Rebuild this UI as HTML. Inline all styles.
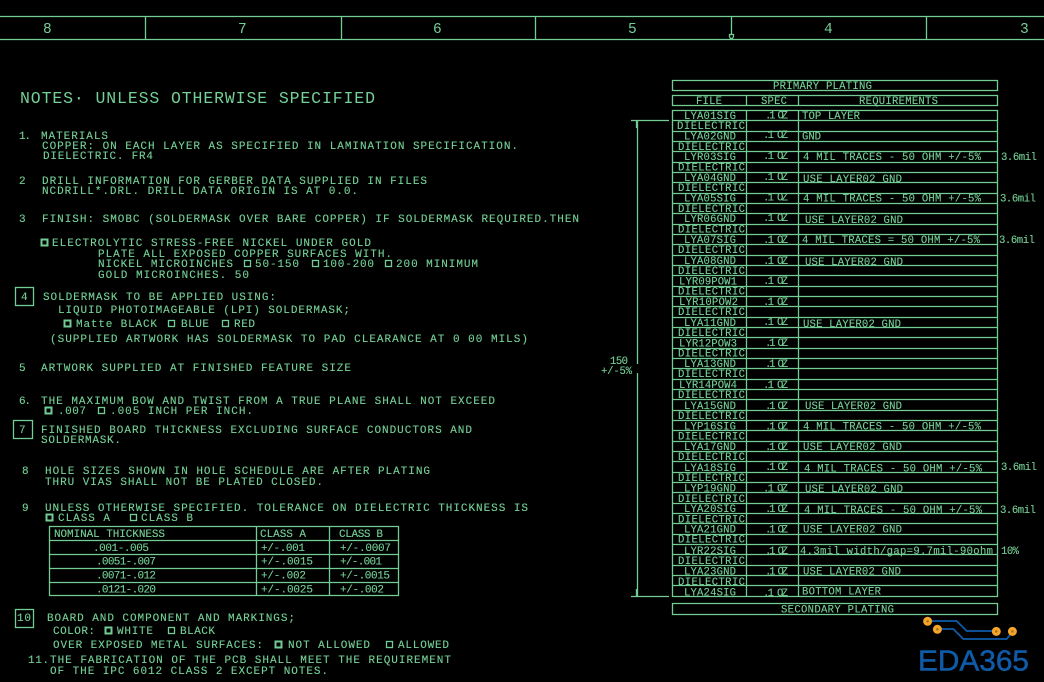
<!DOCTYPE html>
<html><head><meta charset="utf-8"><style>
html,body{margin:0;padding:0;background:#000;width:1044px;height:682px;overflow:hidden}
svg{display:block}
text{font-family:"Liberation Mono",monospace;font-size:11px;fill:#74d096;stroke:#74d096;stroke-width:.12}
.t{font-size:10.6px}
.d{font-size:14.5px;stroke-width:0}
.h{font-size:16.5px;stroke-width:0}
.l{fill:none;stroke:#72cc94;stroke-width:1.3}
.b{fill:none;stroke:#72cc94;stroke-width:1.3}
.k{fill:none;stroke:#72cc94;stroke-width:2}
.logo{font-family:"Liberation Sans",sans-serif;font-size:29px;fill:#0f5ba8;stroke:#0f5ba8;stroke-width:.5}
</style></head><body>
<svg width="1044" height="682" viewBox="0 0 1044 682" xmlns="http://www.w3.org/2000/svg">
<path class="l" d="M0 16.5H1044M0 39.5H1044M145.5 16V39M341.5 16V39M535.5 16V39M731.5 16V34M926.5 16V39"/>
<path class="l" d="M729.5 34.5h4v2l-1 2h-2l-1-2z"/>
<text class="d" x="43" y="33" textLength="8">8</text>
<text class="d" x="238" y="33" textLength="8">7</text>
<text class="d" x="433" y="33" textLength="8">6</text>
<text class="d" x="628" y="33" textLength="8">5</text>
<text class="d" x="824" y="33" textLength="8">4</text>
<text class="d" x="1020" y="33" textLength="8">3</text>

<text class="h" x="20" y="103" textLength="355">NOTES· UNLESS OTHERWISE SPECIFIED</text>
<text x="19" y="139" textLength="12">1.</text>
<text x="41" y="139" textLength="67">MATERIALS</text>
<text x="42" y="149" textLength="476">COPPER: ON EACH LAYER AS SPECIFIED IN LAMINATION SPECIFICATION.</text>
<text x="43" y="159" textLength="110">DIELECTRIC. FR4</text>
<text x="19" y="184">2</text>
<text x="42" y="184" textLength="385">DRILL INFORMATION FOR GERBER DATA SUPPLIED IN FILES</text>
<text x="42" y="194" textLength="316">NCDRILL*.DRL. DRILL DATA ORIGIN IS AT 0.0.</text>
<text x="19" y="222">3</text>
<text x="42" y="222" textLength="537">FINISH: SMOBC (SOLDERMASK OVER BARE COPPER) IF SOLDERMASK REQUIRED.THEN</text>

<rect class="k" x="41.5" y="239.5" width="6" height="6"/>
<text x="52" y="246" textLength="319">ELECTROLYTIC STRESS-FREE NICKEL UNDER GOLD</text>
<text x="98" y="257" textLength="294">PLATE ALL EXPOSED COPPER SURFACES WITH.</text>
<text x="98" y="267" textLength="135">NICKEL MICROINCHES</text>
<rect class="b" x="244.5" y="260.5" width="6" height="6"/>
<text x="255" y="267" textLength="44">50-150</text>
<rect class="b" x="312.5" y="260.5" width="6" height="6"/>
<text x="323" y="267" textLength="51">100-200</text>
<rect class="b" x="385.5" y="260.5" width="6" height="6"/>
<text x="396" y="267" textLength="82">200 MINIMUM</text>
<text x="98" y="278" textLength="151">GOLD MICROINCHES. 50</text>

<rect class="b" x="15.5" y="287.5" width="18" height="18"/>
<text x="21" y="300">4</text>
<text x="43" y="300" textLength="233">SOLDERMASK TO BE APPLIED USING:</text>
<text x="58" y="313" textLength="292">LIQUID PHOTOIMAGEABLE (LPI) SOLDERMASK;</text>
<rect class="k" x="64.5" y="320.5" width="6" height="6"/>
<text x="76" y="327" textLength="81">Matte BLACK</text>
<rect class="b" x="168.5" y="320.5" width="6" height="6"/>
<text x="181" y="327" textLength="28">BLUE</text>
<rect class="b" x="222.5" y="320.5" width="6" height="6"/>
<text x="234" y="327" textLength="21">RED</text>
<text x="50" y="342" textLength="478">(SUPPLIED ARTWORK HAS SOLDERMASK TO PAD CLEARANCE AT 0 00 MILS)</text>

<text x="19" y="371">5</text>
<text x="41" y="371" textLength="310">ARTWORK SUPPLIED AT FINISHED FEATURE SIZE</text>
<text x="19" y="404" textLength="12">6.</text>
<text x="41" y="404" textLength="454">THE MAXIMUM BOW AND TWIST FROM A TRUE PLANE SHALL NOT EXCEED</text>
<rect class="k" x="45.5" y="407.5" width="6" height="6"/>
<text x="58" y="414" textLength="28">.007</text>
<rect class="b" x="98.5" y="407.5" width="6" height="6"/>
<text x="110" y="414" textLength="143">.005 INCH PER INCH.</text>

<rect class="b" x="13.5" y="420.5" width="19" height="18"/>
<text x="19" y="433">7</text>
<text x="41" y="433" textLength="431">FINISHED BOARD THICKNESS EXCLUDING SURFACE CONDUCTORS AND</text>
<text x="41" y="443" textLength="80">SOLDERMASK.</text>

<text x="22" y="474">8</text>
<text x="45" y="474" textLength="385">HOLE SIZES SHOWN IN HOLE SCHEDULE ARE AFTER PLATING</text>
<text x="45" y="485" textLength="278">THRU VIAS SHALL NOT BE PLATED CLOSED.</text>
<text x="22" y="511">9</text>
<text x="45" y="511" textLength="483">UNLESS OTHERWISE SPECIFIED. TOLERANCE ON DIELECTRIC THICKNESS IS</text>
<rect class="k" x="46.5" y="514.5" width="6" height="6"/>
<text x="58" y="521" textLength="52">CLASS A</text>
<rect class="b" x="130.5" y="514.5" width="6" height="6"/>
<text x="141" y="521" textLength="52">CLASS B</text>

<path class="b" d="M49.5 526.5H398.5V595.5H49.5ZM49.5 540.5H398.5M49.5 554.5H398.5M49.5 568.5H398.5M49.5 582.5H398.5M256.5 526.5V595.5M329.5 526.5V595.5"/>
<text x="54" y="537" textLength="111">NOMINAL THICKNESS</text>
<text x="260" y="537" textLength="46">CLASS A</text>
<text x="339" y="537" textLength="44">CLASS B</text>
<text x="93" y="551" textLength="56">.001-.005</text>
<text x="261" y="551" textLength="44">+/-.001</text>
<text x="340" y="551" textLength="51">+/-.0007</text>
<text x="96" y="564.5" textLength="60">.0051-.007</text>
<text x="261" y="564.5" textLength="52">+/-.0015</text>
<text x="340" y="564.5" textLength="42">+/-.001</text>
<text x="96" y="578.5" textLength="60">.0071-.012</text>
<text x="261" y="578.5" textLength="45">+/-.002</text>
<text x="340" y="578.5" textLength="50">+/-.0015</text>
<text x="96" y="592.5" textLength="60">.0121-.020</text>
<text x="261" y="592.5" textLength="52">+/-.0025</text>
<text x="340" y="592.5" textLength="44">+/-.002</text>

<rect class="b" x="15.5" y="609.5" width="18" height="18"/>
<text x="17" y="621" textLength="14">10</text>
<text x="47" y="621" textLength="248">BOARD AND COMPONENT AND MARKINGS;</text>
<text x="53" y="634" textLength="42">COLOR:</text>
<rect class="k" x="105.5" y="627.5" width="6" height="6"/>
<text x="117" y="634" textLength="36">WHITE</text>
<rect class="b" x="168.5" y="627.5" width="6" height="6"/>
<text x="180" y="634" textLength="35">BLACK</text>
<text x="53" y="648" textLength="210">OVER EXPOSED METAL SURFACES:</text>
<rect class="k" x="275.5" y="641.5" width="6" height="6"/>
<text x="288" y="648" textLength="82">NOT ALLOWED</text>
<rect class="b" x="386.5" y="641.5" width="6" height="6"/>
<text x="398" y="648" textLength="51">ALLOWED</text>
<text x="28" y="663" textLength="21">11.</text>
<text x="50" y="663" textLength="401">THE FABRICATION OF THE PCB SHALL MEET THE REQUIREMENT</text>
<text x="50" y="674" textLength="278">OF THE IPC 6012 CLASS 2 EXCEPT NOTES.</text>

<!-- plating table -->
<path class="l" d="M672.5 80.5H997.5V90.5H672.5ZM672.5 95.5H997.5V105.5H672.5ZM746.5 95.5V105.5M798.5 95.5V105.5M672.5 603.5H997.5V614.5H672.5Z"/>
<path class="l" d="M672.5 110.5H997.5V596.5H672.5ZM746.5 110.5V596.5M798.5 110.5V596.5M672.5 120.5H997.5M672.5 131.5H997.5M672.5 141.5H997.5M672.5 151.5H997.5M672.5 162.5H997.5M672.5 172.5H997.5M672.5 182.5H997.5M672.5 193.5H997.5M672.5 203.5H997.5M672.5 213.5H997.5M672.5 224.5H997.5M672.5 234.5H997.5M672.5 244.5H997.5M672.5 255.5H997.5M672.5 265.5H997.5M672.5 275.5H997.5M672.5 286.5H997.5M672.5 296.5H997.5M672.5 306.5H997.5M672.5 317.5H997.5M672.5 327.5H997.5M672.5 337.5H997.5M672.5 348.5H997.5M672.5 358.5H997.5M672.5 368.5H997.5M672.5 379.5H997.5M672.5 389.5H997.5M672.5 399.5H997.5M672.5 410.5H997.5M672.5 420.5H997.5M672.5 430.5H997.5M672.5 441.5H997.5M672.5 451.5H997.5M672.5 461.5H997.5M672.5 472.5H997.5M672.5 482.5H997.5M672.5 492.5H997.5M672.5 503.5H997.5M672.5 513.5H997.5M672.5 523.5H997.5M672.5 534.5H997.5M672.5 544.5H997.5M672.5 554.5H997.5M672.5 565.5H997.5M672.5 575.5H997.5M672.5 585.5H997.5"/>
<path class="l" d="M631 120.5H669M631 596.5H669M637.5 120.5V364M637.5 373V596.5M636.5 121V128M636.5 589V596"/>
<text class="t" x="610" y="364" textLength="18">150</text>
<text class="t" x="601" y="374" textLength="31">+/-5%</text>

<text class="t" x="773" y="89" textLength="99">PRIMARY PLATING</text>
<text class="t" x="696" y="104" textLength="26">FILE</text>
<text class="t" x="761" y="104" textLength="26">SPEC</text>
<text class="t" x="859" y="104" textLength="79">REQUIREMENTS</text>
<text class="t" x="781" y="612.5" textLength="113">SECONDARY PLATING</text>

<text class="t" x="684" y="119" textLength="52">LYA01SIG</text><text class="t" x="765" y="118.5" textLength="23">.1 OZ</text><text class="t" x="802" y="119" textLength="58">TOP LAYER</text>
<text class="t" x="677" y="129" textLength="68">DIELECTRIC</text>
<text class="t" x="684" y="139.5" textLength="52">LYA02GND</text><text class="t" x="763" y="138" textLength="25">.1 OZ</text><text class="t" x="802" y="139.5" textLength="19">GND</text>
<text class="t" x="678" y="150" textLength="67">DIELECTRIC</text>
<text class="t" x="684" y="160" textLength="52">LYR03SIG</text><text class="t" x="763" y="159" textLength="25">.1 OZ</text><text class="t" x="803" y="160" textLength="178">4 MIL TRACES - 50 OHM +/-5%</text><text class="t" x="1001" y="160" textLength="36">3.6mil</text>
<text class="t" x="678" y="170.5" textLength="67">DIELECTRIC</text>
<text class="t" x="684" y="181" textLength="52">LYA04GND</text><text class="t" x="763" y="180" textLength="25">.1 OZ</text><text class="t" x="803" y="182" textLength="99">USE LAYER02 GND</text>
<text class="t" x="678" y="191" textLength="67">DIELECTRIC</text>
<text class="t" x="684" y="201.5" textLength="52">LYA05SIG</text><text class="t" x="763" y="200.5" textLength="25">.1 OZ</text><text class="t" x="803" y="201.5" textLength="178">4 MIL TRACES - 50 OHM +/-5%</text><text class="t" x="1000" y="201.5" textLength="36">3.6mil</text>
<text class="t" x="678" y="212" textLength="67">DIELECTRIC</text>
<text class="t" x="684" y="222" textLength="52">LYR06GND</text><text class="t" x="763" y="221" textLength="25">.1 OZ</text><text class="t" x="805" y="223" textLength="98">USE LAYER02 GND</text>
<text class="t" x="678" y="232.5" textLength="67">DIELECTRIC</text>
<text class="t" x="684" y="243" textLength="52">LYA07SIG</text><text class="t" x="763" y="243" textLength="25">.1 OZ</text><text class="t" x="802" y="243" textLength="178">4 MIL TRACES = 50 OHM +/-5%</text><text class="t" x="999" y="243" textLength="36">3.6mil</text>
<text class="t" x="678" y="253" textLength="67">DIELECTRIC</text>
<text class="t" x="684" y="264" textLength="52">LYA08GND</text><text class="t" x="763" y="264" textLength="25">.1 OZ</text><text class="t" x="805" y="265" textLength="98">USE LAYER02 GND</text>
<text class="t" x="678" y="274" textLength="67">DIELECTRIC</text>
<text class="t" x="679" y="284.5" textLength="58">LYR09POW1</text><text class="t" x="763" y="284" textLength="25">.1 OZ</text>
<text class="t" x="678" y="294.5" textLength="67">DIELECTRIC</text>
<text class="t" x="679" y="305" textLength="59">LYR10POW2</text><text class="t" x="763" y="305" textLength="25">.1 OZ</text>
<text class="t" x="678" y="315" textLength="67">DIELECTRIC</text>
<text class="t" x="684" y="326" textLength="52">LYA11GND</text><text class="t" x="763" y="325" textLength="25">.1 OZ</text><text class="t" x="803" y="327" textLength="98">USE LAYER02 GND</text>
<text class="t" x="678" y="336" textLength="67">DIELECTRIC</text>
<text class="t" x="679" y="346.5" textLength="58">LYR12POW3</text><text class="t" x="765" y="346" textLength="23">.1 OZ</text>
<text class="t" x="678" y="356.5" textLength="67">DIELECTRIC</text>
<text class="t" x="684" y="367" textLength="52">LYA13GND</text><text class="t" x="765" y="367" textLength="23">.1 OZ</text>
<text class="t" x="678" y="377" textLength="67">DIELECTRIC</text>
<text class="t" x="679" y="388" textLength="58">LYR14POW4</text><text class="t" x="763" y="388" textLength="25">.1 OZ</text>
<text class="t" x="678" y="398" textLength="67">DIELECTRIC</text>
<text class="t" x="684" y="409" textLength="52">LYA15GND</text><text class="t" x="765" y="409" textLength="23">.1 OZ</text><text class="t" x="805" y="409" textLength="97">USE LAYER02 GND</text>
<text class="t" x="678" y="419" textLength="67">DIELECTRIC</text>
<text class="t" x="684" y="429.5" textLength="52">LYP16SIG</text><text class="t" x="765" y="429.5" textLength="23">.1 OZ</text><text class="t" x="803" y="429.5" textLength="178">4 MIL TRACES - 50 OHM +/-5%</text>
<text class="t" x="678" y="439.5" textLength="67">DIELECTRIC</text>
<text class="t" x="684" y="450" textLength="52">LYA17GND</text><text class="t" x="765" y="450" textLength="23">.1 OZ</text><text class="t" x="803" y="450" textLength="99">USE LAYER02 GND</text>
<text class="t" x="678" y="460" textLength="67">DIELECTRIC</text>
<text class="t" x="684" y="471" textLength="52">LYA18SIG</text><text class="t" x="765" y="470" textLength="23">.1 OZ</text><text class="t" x="804" y="471.5" textLength="178">4 MIL TRACES - 50 OHM +/-5%</text><text class="t" x="1001" y="470" textLength="36">3.6mil</text>
<text class="t" x="678" y="481" textLength="67">DIELECTRIC</text>
<text class="t" x="684" y="491.5" textLength="52">LYP19GND</text><text class="t" x="763" y="491.5" textLength="25">.1 OZ</text><text class="t" x="805" y="492" textLength="98">USE LAYER02 GND</text>
<text class="t" x="678" y="502" textLength="67">DIELECTRIC</text>
<text class="t" x="684" y="512" textLength="52">LYA20SIG</text><text class="t" x="765" y="512" textLength="23">.1 OZ</text><text class="t" x="804" y="513" textLength="178">4 MIL TRACES - 50 OHM +/-5%</text><text class="t" x="1000" y="513" textLength="36">3.6mil</text>
<text class="t" x="678" y="522.5" textLength="67">DIELECTRIC</text>
<text class="t" x="684" y="532.5" textLength="52">LYA21GND</text><text class="t" x="765" y="532.5" textLength="23">.1 OZ</text><text class="t" x="803" y="532.5" textLength="99">USE LAYER02 GND</text>
<text class="t" x="678" y="542.5" textLength="67">DIELECTRIC</text>
<text class="t" x="684" y="554" textLength="52">LYR22SIG</text><text class="t" x="765" y="554" textLength="23">.1 OZ</text><text class="t" x="800" y="554" textLength="193">4.3mil width/gap=9.7mil-90ohm</text><text class="t" x="1001" y="554" textLength="18">10%</text>
<text class="t" x="678" y="564" textLength="67">DIELECTRIC</text>
<text class="t" x="684" y="574.5" textLength="52">LYA23GND</text><text class="t" x="765" y="574.5" textLength="23">.1 OZ</text><text class="t" x="803" y="574.5" textLength="98">USE LAYER02 GND</text>
<text class="t" x="678" y="585" textLength="67">DIELECTRIC</text>
<text class="t" x="684" y="595.5" textLength="52">LYA24SIG</text><text class="t" x="763" y="596" textLength="25">.1 OZ</text><text class="t" x="802" y="594.5" textLength="79">BOTTOM LAYER</text>

<!-- logo -->
<path d="M927.5 621H956.7L966.7 631H996.3" fill="none" stroke="#0f5ba8" stroke-width="1.8"/>
<path d="M937.3 629H953.3L963.3 639H1006.7L1012.3 632" fill="none" stroke="#0f5ba8" stroke-width="1.8"/>
<circle cx="927.6" cy="621.3" r="2.9" fill="#a8741e" stroke="#f5a52a" stroke-width="3.2"/>
<circle cx="937.4" cy="629.3" r="2.9" fill="#a8741e" stroke="#f5a52a" stroke-width="3.2"/>
<circle cx="996.3" cy="631.4" r="2.9" fill="#a8741e" stroke="#f5a52a" stroke-width="3.2"/>
<circle cx="1012.4" cy="631.4" r="2.9" fill="#a8741e" stroke="#f5a52a" stroke-width="3.2"/>
<text class="logo" x="918" y="670.5" textLength="111" lengthAdjust="spacingAndGlyphs">EDA365</text>
</svg>
</body></html>
